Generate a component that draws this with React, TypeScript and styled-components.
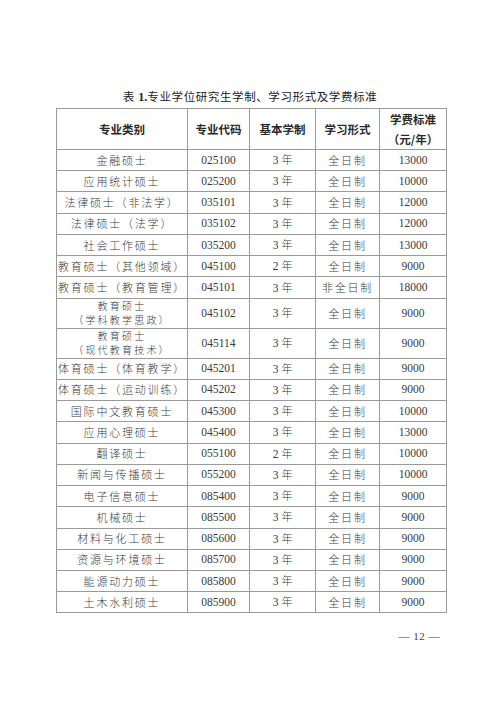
import React from 'react';
import styled, { createGlobalStyle } from 'styled-components';

const GlobalStyle = createGlobalStyle`
  html, body {
    margin: 0;
    padding: 0;
    background: #ffffff;
  }
`;

const Page = styled.div`
  width: 500px;
  height: 707px;
  padding-top: 89px;
  box-sizing: border-box;
  color: #333;
  font-family: 'Liberation Serif', 'Noto Sans CJK SC', serif;
`;

const Title = styled.h1`
  margin: 0 0 3px;
  height: 16px;
  line-height: 16px;
  text-align: center;
  font-size: 11.5px;
  font-weight: 400;
  letter-spacing: 0.6px;
  color: #222;

  b {
    font-family: 'Liberation Serif', serif;
    font-weight: 700;
    font-size: 12px;
    letter-spacing: 0;
  }
`;

const Table = styled.table`
  margin-left: 56px;
  width: 390px;
  border-collapse: collapse;
  table-layout: fixed;
  border: 1.4px solid #8a8a8a;
`;

const HeadCell = styled.th`
  height: 40px;
  padding: 0;
  border: 1px solid #9a9a9a;
  font-family: 'Noto Sans CJK SC', sans-serif;
  font-size: 11.5px;
  font-weight: 700;
  line-height: 20px;
  color: #2a2a2a;
  text-align: center;
  vertical-align: middle;
`;

const Row = styled.tr<{ $tall?: boolean }>`
  height: ${(p) => (p.$tall ? '29px' : '21.24px')};
`;

const Cell = styled.td<{ $cjk?: boolean }>`
  padding: 0;
  border: 1px solid #9a9a9a;
  text-align: center;
  vertical-align: middle;
  white-space: nowrap;
  font-family: ${(p) =>
    p.$cjk
      ? "'Noto Sans CJK SC', sans-serif"
      : "'Liberation Serif', 'Noto Sans CJK SC', serif"};
  font-size: ${(p) => (p.$cjk ? '11px' : '11.5px')};
  font-weight: ${(p) => (p.$cjk ? 300 : 400)};
  letter-spacing: ${(p) => (p.$cjk ? '1.8px' : '0')};
  line-height: 13px;
  color: #3a3a3a;
`;

const NameLine = styled.span`
  display: block;
  font-size: 10px;
  line-height: 14.5px;
  letter-spacing: 2.2px;
`;

const Year = styled.span`
  font-family: 'Noto Sans CJK SC', sans-serif;
  font-weight: 300;
  font-size: 11px;
  margin-left: 3px;
`;

const Footer = styled.div`
  margin-top: 17px;
  padding-right: 60px;
  text-align: right;
  font-size: 11px;
  color: #444;
  letter-spacing: 0.5px;
`;

type Item = { name: string[]; code: string; years: number; form: string; fee: string };

const rows: Item[] = [
  { name: ['金融硕士'], code: '025100', years: 3, form: '全日制', fee: '13000' },
  { name: ['应用统计硕士'], code: '025200', years: 3, form: '全日制', fee: '10000' },
  { name: ['法律硕士（非法学）'], code: '035101', years: 3, form: '全日制', fee: '12000' },
  { name: ['法律硕士（法学）'], code: '035102', years: 3, form: '全日制', fee: '12000' },
  { name: ['社会工作硕士'], code: '035200', years: 3, form: '全日制', fee: '13000' },
  { name: ['教育硕士（其他领域）'], code: '045100', years: 2, form: '全日制', fee: '9000' },
  { name: ['教育硕士（教育管理）'], code: '045101', years: 3, form: '非全日制', fee: '18000' },
  { name: ['教育硕士', '（学科教学思政）'], code: '045102', years: 3, form: '全日制', fee: '9000' },
  { name: ['教育硕士', '（现代教育技术）'], code: '045114', years: 3, form: '全日制', fee: '9000' },
  { name: ['体育硕士（体育教学）'], code: '045201', years: 3, form: '全日制', fee: '9000' },
  { name: ['体育硕士（运动训练）'], code: '045202', years: 3, form: '全日制', fee: '9000' },
  { name: ['国际中文教育硕士'], code: '045300', years: 3, form: '全日制', fee: '10000' },
  { name: ['应用心理硕士'], code: '045400', years: 3, form: '全日制', fee: '13000' },
  { name: ['翻译硕士'], code: '055100', years: 2, form: '全日制', fee: '10000' },
  { name: ['新闻与传播硕士'], code: '055200', years: 3, form: '全日制', fee: '10000' },
  { name: ['电子信息硕士'], code: '085400', years: 3, form: '全日制', fee: '9000' },
  { name: ['机械硕士'], code: '085500', years: 3, form: '全日制', fee: '9000' },
  { name: ['材料与化工硕士'], code: '085600', years: 3, form: '全日制', fee: '9000' },
  { name: ['资源与环境硕士'], code: '085700', years: 3, form: '全日制', fee: '9000' },
  { name: ['能源动力硕士'], code: '085800', years: 3, form: '全日制', fee: '9000' },
  { name: ['土木水利硕士'], code: '085900', years: 3, form: '全日制', fee: '9000' },
];

export default function App() {
  return (
    <Page>
      <GlobalStyle />
      <Title>
        表 <b>1.</b>专业学位研究生学制、学习形式及学费标准
      </Title>
      <Table>
        <colgroup>
          <col style={{ width: 131 }} />
          <col style={{ width: 62 }} />
          <col style={{ width: 66 }} />
          <col style={{ width: 64 }} />
          <col style={{ width: 67 }} />
        </colgroup>
        <thead>
          <tr>
            <HeadCell>专业类别</HeadCell>
            <HeadCell>专业代码</HeadCell>
            <HeadCell>基本学制</HeadCell>
            <HeadCell>学习形式</HeadCell>
            <HeadCell>
              学费标准
              <br />（元/年）
            </HeadCell>
          </tr>
        </thead>
        <tbody>
          {rows.map((r) => {
            const tall = r.name.length > 1;
            return (
              <Row key={r.code} $tall={tall}>
                <Cell $cjk>
                  {tall
                    ? r.name.map((line) => <NameLine key={line}>{line}</NameLine>)
                    : r.name[0]}
                </Cell>
                <Cell>{r.code}</Cell>
                <Cell>
                  {r.years}
                  <Year>年</Year>
                </Cell>
                <Cell $cjk>{r.form}</Cell>
                <Cell>{r.fee}</Cell>
              </Row>
            );
          })}
        </tbody>
      </Table>
      <Footer>— 12 —</Footer>
    </Page>
  );
}
